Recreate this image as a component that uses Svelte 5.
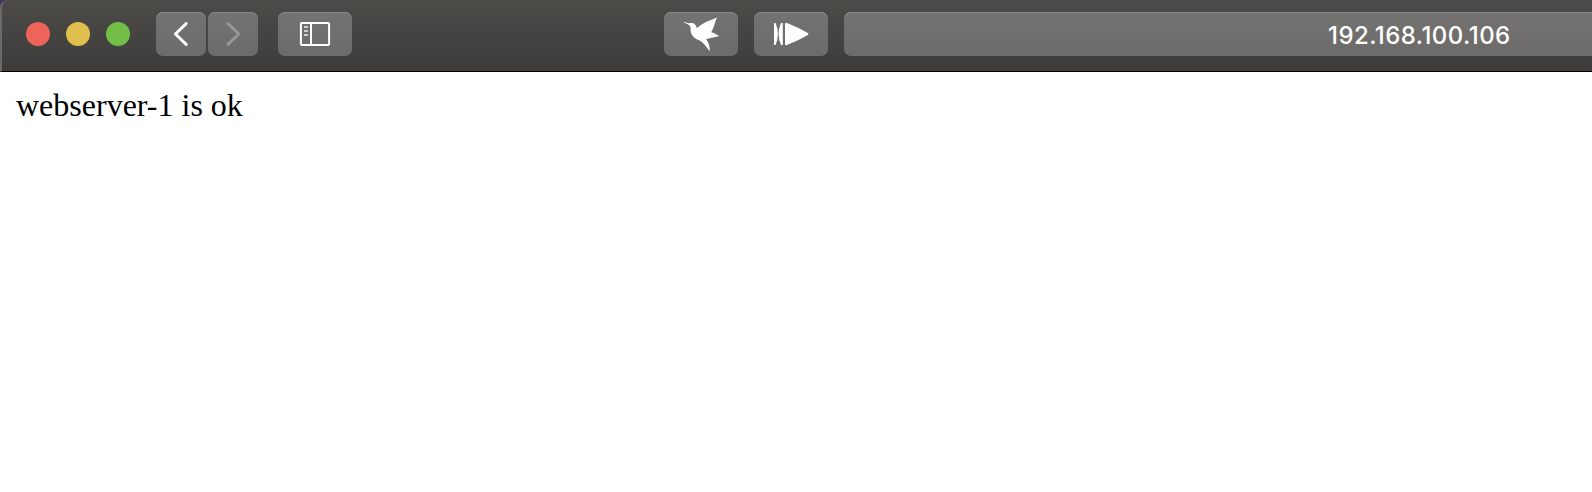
<script>
  const lights = ['close', 'minimize', 'zoom'];
  const address = '192.168.100.106';
</script>

<div class="window">
  <header class="toolbar">
    <div class="lights">
      {#each lights as light}
        <span class="light {light}"></span>
      {/each}
    </div>

    <nav class="history">
      <button class="btn narrow" aria-label="Back">
        <svg width="50" height="44" viewBox="0 0 50 44" fill="none" stroke="#fff" stroke-width="3" stroke-linecap="round" stroke-linejoin="round"><path d="M30.2 11.6 19.4 22l10.8 10.4" /></svg>
      </button>
      <button class="btn narrow" aria-label="Forward">
        <svg width="50" height="44" viewBox="0 0 50 44" fill="none" stroke="#989795" stroke-width="3" stroke-linecap="round" stroke-linejoin="round"><path d="M20 11.6 30.8 22 20 32.4" /></svg>
      </button>
    </nav>

    <button class="btn sidebar" aria-label="Show sidebar">
      <svg width="74" height="44" viewBox="0 0 74 44" fill="none">
        <rect x="22.9" y="10.9" width="28.2" height="22.2" rx="1" stroke="#fff" stroke-width="2" />
        <path d="M33 11v22" stroke="#fff" stroke-width="2" />
        <path d="M26 15h4M26 19h4M26 23h4" stroke="#d0d0ce" stroke-width="2" />
      </svg>
    </button>

    <button class="btn bird" aria-label="Bird">
      <svg width="74" height="44" viewBox="0 0 74 44" fill="#fff">
        <path d="M18.8 10.2C21.5 10 23.8 10.8 25.4 11.5C27.3 10.6 29.9 11 31.1 12.5C32.1 13.7 32.2 15 33 16C37.5 11.7 44.5 8.7 53.2 5.5C50.6 9.7 50.6 14.8 47.2 20.3C49.6 20.7 52.4 22.3 55.2 24.1C51.7 25.4 46.6 26 42.2 27C45 30.7 45.8 35.2 45.8 39.2C42.3 34.9 39.4 30.5 35.2 28.3C29.8 26.3 26.2 22.3 26.6 16.7C26.7 14.7 26 13.5 24.8 13C23 11.5 21.2 11 18.8 10.2Z" />
      </svg>
    </button>

    <button class="btn play" aria-label="Play">
      <svg width="74" height="44" viewBox="0 0 74 44" fill="#fff">
        <path d="M20 11h1.5Q26.3 22 21.5 33H20Z" />
        <path d="M27 11h1.8v22H27Q22.2 22 27 11Z" />
        <path d="M31 12.2q0-2.1 2-1.3Q44 15.2 53.4 20.7q2 1.3 0 2.6Q44 28.8 33 33.1q-2 .8-2-1.3Z" />
      </svg>
    </button>

    <div class="address"><span>{address}</span></div>
  </header>

  <main>webserver-1 is ok</main>
</div>

<style>
  :global(body) {
    margin: 0;
    overflow: hidden;
    background: #fff;
  }
  .window {
    width: 1592px;
    height: 492px;
    overflow: hidden;
    background: linear-gradient(#43325c 0 10px, #fff 10px);
  }
  .toolbar {
    box-sizing: border-box;
    display: flex;
    align-items: flex-start;
    height: 72px;
    padding: 12px 0 0 24px;
    border-left: 2px solid #6b6a69;
    border-bottom: 1px solid #000;
    border-top-left-radius: 8px;
    background: linear-gradient(#4c4b48, #3d3c3a);
  }
  .lights {
    display: flex;
    gap: 16px;
    padding-top: 10px;
    margin-right: 26px;
  }
  .light {
    width: 24px;
    height: 24px;
    border-radius: 50%;
  }
  .close { background: #ed655a; }
  .minimize { background: #e0c04c; }
  .zoom { background: #72be47; }
  .history {
    display: flex;
    gap: 2px;
    margin-right: 20px;
  }
  .btn,
  .address {
    box-sizing: border-box;
    height: 44px;
    border: 0;
    border-radius: 7px;
    background: linear-gradient(#747371, #6c6b69);
    box-shadow: inset 0 1px #8a8987;
  }
  .btn {
    flex: none;
    width: 74px;
    padding: 0;
  }
  .btn svg {
    display: block;
  }
  .narrow { width: 50px; }
  .sidebar { margin-right: 312px; }
  .bird,
  .play { margin-right: 16px; }
  .address {
    flex: 1;
    border-radius: 7px 0 0 7px;
    padding-left: 484px;
    color: #fff;
    font: 500 24px/47px Inter, sans-serif;
    letter-spacing: 0.45px;
    white-space: nowrap;
  }
  main {
    padding: 15px 16px;
    color: #000;
    font: 32px/37px "Liberation Serif", serif;
  }
</style>
